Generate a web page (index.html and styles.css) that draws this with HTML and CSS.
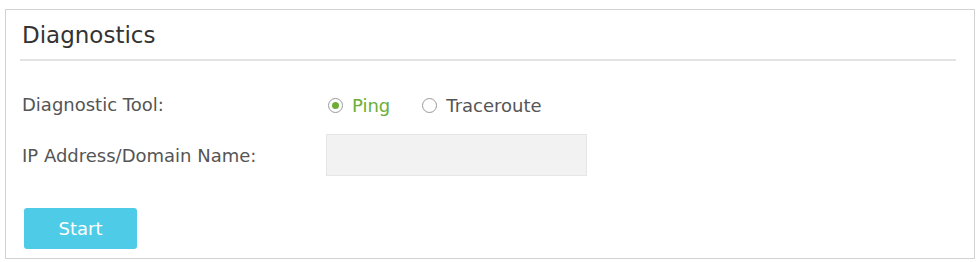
FILE: index.html
```html
<!DOCTYPE html>
<html>
<head>
<meta charset="utf-8">
<link rel="stylesheet" href="styles.css">
</head>
<body>
<div class="panel">
  <h2 class="title">Diagnostics</h2>
  <div class="divider"></div>
  <div class="row">
    <div class="label">Diagnostic Tool:</div>
    <div class="control radios">
      <label class="radio checked"><span class="dot"></span><span class="rtext">Ping</span></label>
      <label class="radio"><span class="dot"></span><span class="rtext">Traceroute</span></label>
    </div>
  </div>
  <div class="row">
    <div class="label">IP Address/Domain Name:</div>
    <div class="control"><input class="text-input" type="text"></div>
  </div>
  <div class="actions">
    <button class="btn">Start</button>
  </div>
</div>
</body>
</html>
```
FILE: styles.css
```css
html, body {
  margin: 0;
  padding: 0;
  background: #ffffff;
}
body {
  font-family: "DejaVu Sans", Verdana, sans-serif;
  color: #555555;
}
.panel {
  margin: 9px 0 0 5px;
  width: 970px;
  height: 250px;
  border: 1px solid #d2d2d2;
  padding: 12px 18px 0 14px;
  box-sizing: border-box;
}
.title {
  margin: 0;
  padding-left: 2px;
  font-size: 23px;
  font-weight: normal;
  color: #333333;
  line-height: 27px;
}
.divider {
  margin-top: 10px;
  height: 2px;
  background: #e3e3e3;
}
.row {
  display: flex;
  align-items: center;
  height: 42px;
  padding-left: 2px;
}
.divider + .row {
  margin-top: 22px;
}
.row + .row {
  margin-top: 9px;
}
.label {
  width: 304px;
  font-size: 18px;
  color: #555555;
}
.radios {
  display: flex;
  align-items: center;
  padding-left: 2px;
  margin-top: 2px;
}
.radio {
  display: flex;
  align-items: center;
  font-size: 18px;
  color: #555555;
  margin-right: 32px;
}
.radio .dot {
  width: 13px;
  height: 13px;
  border: 1px solid #9a9a9a;
  border-radius: 50%;
  box-sizing: content-box;
  margin-right: 9px;
  position: relative;
  background: #fff;
}
.radio.checked .dot::after {
  content: "";
  position: absolute;
  left: 3px;
  top: 3px;
  width: 7px;
  height: 7px;
  border-radius: 50%;
  background: #6aae36;
}
.radio.checked {
  color: #6aae36;
}
.text-input {
  width: 261px;
  height: 42px;
  box-sizing: border-box;
  border: 1px solid #e6e6e6;
  background: #f2f2f2;
  margin: 0;
  padding: 0 8px;
  outline: none;
  font-family: inherit;
  font-size: 17px;
}
.actions {
  margin-top: 32px;
  padding-left: 4px;
}
.btn {
  width: 113px;
  height: 41px;
  border: none;
  border-radius: 3px;
  background: #4ecbe6;
  color: #ffffff;
  font-family: "DejaVu Sans", Verdana, sans-serif;
  font-size: 18px;
  padding: 0;
}
```
